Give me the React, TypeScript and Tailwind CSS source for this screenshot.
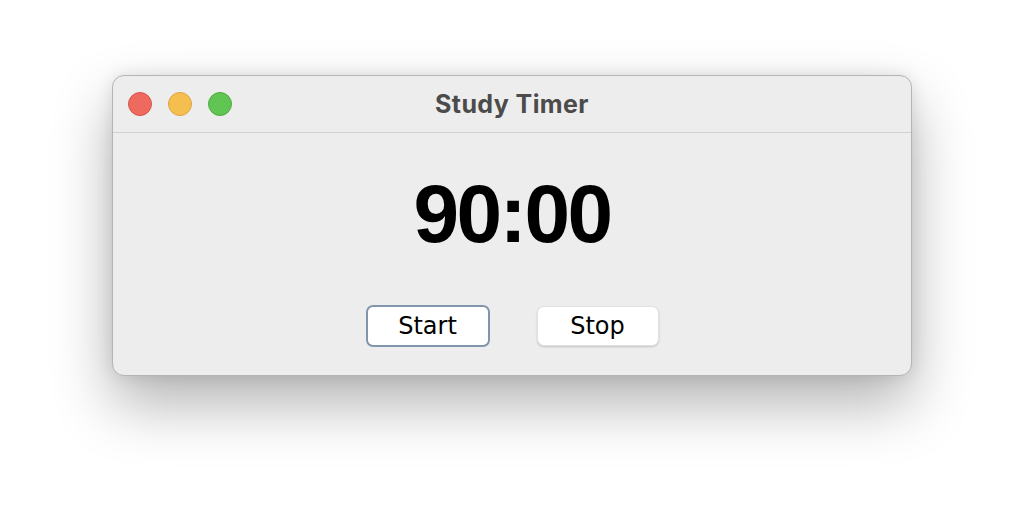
import React from 'react';

const Light = ({ fill, edge }: { fill: string; edge: string }) => (
  <span className={`block w-[24px] h-[24px] rounded-full border ${fill} ${edge}`} />
);

export default function App() {
  return (
    <div className="w-[1024px] h-[524px] bg-white flex justify-center pt-[75px] overflow-hidden">
      <div className="w-[800px] h-[301px] rounded-[12px] bg-[#ededed] border border-[#b4b4b4] shadow-[0_28px_60px_rgba(0,0,0,0.30),0_0_16px_rgba(0,0,0,0.10)] flex flex-col overflow-hidden">
        <div className="relative h-[57px] shrink-0 border-b border-[#d0d0d0] flex items-center justify-center">
          <div className="absolute left-[15px] top-[16px] flex gap-[16px]">
            <Light fill="bg-[#ee6a5f]" edge="border-[#d8544a]" />
            <Light fill="bg-[#f5bf4f]" edge="border-[#dca53b]" />
            <Light fill="bg-[#61c554]" edge="border-[#4faa42]" />
          </div>
          <span className="text-[25px] font-bold tracking-[0.4px] text-[#4b4b4b] leading-none" style={{ fontFamily: 'Inter, "Liberation Sans", sans-serif' }}>
            Study Timer
          </span>
        </div>

        <div className="flex flex-col items-center pt-[40px]">
          <div
            className="text-[82px] font-bold tracking-[-2.5px] leading-none text-black"
            style={{ fontFamily: '"Liberation Sans", Arial, sans-serif' }}
          >
            90:00
          </div>

          <div
            className="mt-[50px] flex items-center gap-[47px]"
            style={{ fontFamily: '"DejaVu Sans", "Liberation Sans", sans-serif' }}
          >
            <button className="w-[124px] h-[42px] rounded-[7px] bg-white border-2 border-[#8196ac] text-[24px] text-black leading-none">
              Start
            </button>
            <button className="w-[122px] h-[40px] rounded-[7px] bg-white border border-[#e2e2e2] shadow-[0_1px_2px_rgba(0,0,0,0.18)] text-[24px] text-black leading-none">
              Stop
            </button>
          </div>
        </div>
      </div>
    </div>
  );
}
